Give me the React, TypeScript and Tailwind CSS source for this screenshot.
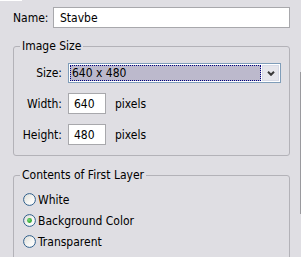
import { ReactNode } from 'react';

const font = { fontFamily: '"DejaVu Sans Condensed", "DejaVu Sans", Tahoma, sans-serif' };

function Radio({ checked, label }: { checked?: boolean; label: string }) {
  return (
    <label className="flex h-[21px] items-center gap-[2px]">
      <svg width="13" height="13" viewBox="0 0 13 13" className="shrink-0">
        <defs>
          <linearGradient id="rg" x1="0" y1="0" x2="1" y2="1">
            <stop offset="0" stopColor="#dcdcd6" />
            <stop offset="0.6" stopColor="#f7f7f5" />
            <stop offset="1" stopColor="#ffffff" />
          </linearGradient>
          <radialGradient id="dot" cx="0.4" cy="0.4" r="0.6">
            <stop offset="0" stopColor="#7fe07f" />
            <stop offset="1" stopColor="#1f9a1f" />
          </radialGradient>
        </defs>
        <circle cx="6.5" cy="6.5" r="5.9" fill="url(#rg)" stroke="#2f5f8c" strokeWidth="1" />
        {checked && <circle cx="6.5" cy="6.5" r="2.4" fill="url(#dot)" />}
      </svg>
      <span>{label}</span>
    </label>
  );
}

function Field({ label, children }: { label: string; children: ReactNode }) {
  return (
    <div className="flex items-center">
      <span className="w-[48px] text-right">{label}</span>
      <div className="ml-[6px] flex items-center">{children}</div>
    </div>
  );
}

function Group({ title, children, className }: { title: string; children: ReactNode; className?: string }) {
  return (
    <fieldset className={`ml-[13px] w-[277px] rounded-[3px] border border-[#b3b2b8] ${className ?? ''}`}>
      <legend className="ml-[6px] px-[2px] leading-[14px]">{title}</legend>
      {children}
    </fieldset>
  );
}

export default function App() {
  return (
    <div className="flex h-[257px] w-[301px] overflow-hidden bg-[#dfdee3] text-[12px] text-black" style={font}>
      <div className="w-[300px]">
        <div className="h-px w-[22px] bg-white" />

        <div className="mt-[6px] flex items-center">
          <span className="ml-[13px] w-[40px]">Name:</span>
          <div className="flex h-[21px] w-[237px] items-center border border-[#a8a8ac] bg-white pl-[6px]">
            Stavbe
          </div>
        </div>

        <Group title="Image Size" className="mt-[11px] h-[117px]">
          <div className="mt-[10px] flex flex-col gap-[10px]">
            <Field label="Size:">
              <div className="flex h-[20px] w-[213px] items-center border border-[#7f9db9] bg-white p-px">
                <div className="flex h-full flex-1 items-center border border-dotted border-[#000080] bg-[#bcb9cc] pl-px">
                  640 x 480
                </div>
                <div className="ml-px flex h-full w-[17px] items-center justify-center border border-[#d6d9e6] bg-[#e6e6ec]">
                  <svg width="8" height="5" viewBox="0 0 8 5">
                    <path d="M1 0.8 L4 3.8 L7 0.8" fill="none" stroke="#3a3a3a" strokeWidth="2" />
                  </svg>
                </div>
              </div>
            </Field>
            <Field label="Width:">
              <div className="flex h-[21px] w-[38px] items-center border border-[#a8a8ac] bg-white pl-[5px]">640</div>
              <span className="ml-[9px]">pixels</span>
            </Field>
            <Field label="Height:">
              <div className="flex h-[21px] w-[38px] items-center border border-[#a8a8ac] bg-white pl-[5px]">480</div>
              <span className="ml-[9px]">pixels</span>
            </Field>
          </div>
        </Group>

        <Group title="Contents of First Layer" className="mt-[12px] h-[100px]">
          <div className="mt-[7px] flex flex-col pl-[9px]">
            <Radio label="White" />
            <Radio checked label="Background Color" />
            <Radio label="Transparent" />
          </div>
        </Group>
      </div>
      <div className="mt-[72px] h-[142px] w-px bg-[#9a9a9e]" />
    </div>
  );
}
